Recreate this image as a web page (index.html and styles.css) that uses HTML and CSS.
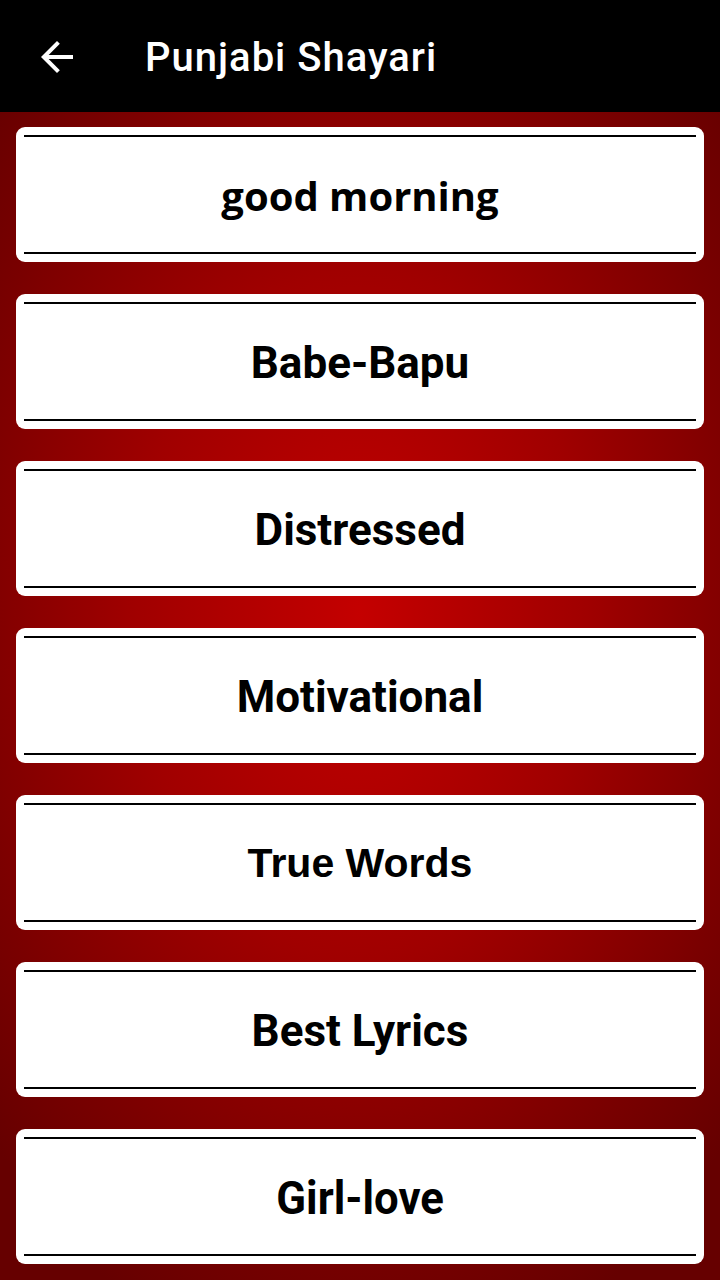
FILE: index.html
```html
<!DOCTYPE html>
<html>
<head>
<meta charset="utf-8">
<link rel="stylesheet" href="styles.css">
</head>
<body>
<header class="appbar">
  <svg class="back" viewBox="0 0 24 24" width="48" height="48"><path fill="#fff" d="M20 11H7.83l5.59-5.59L12 4l-8 8 8 8 1.41-1.41L7.83 13H20v-2z"/></svg>
  <h1 class="title">Punjabi Shayari</h1>
</header>
<main class="list">
  <div class="card"><span class="label f-open">good morning</span></div>
  <div class="card"><span class="label">Babe-Bapu</span></div>
  <div class="card"><span class="label">Distressed</span></div>
  <div class="card"><span class="label">Motivational</span></div>
  <div class="card"><span class="label f-arial">True Words</span></div>
  <div class="card"><span class="label">Best Lyrics</span></div>
  <div class="card"><span class="label f-cond">Girl-love</span></div>
</main>
</body>
</html>
```
FILE: styles.css
```css
* { box-sizing: border-box; }
html, body { margin: 0; padding: 0; }
body {
  width: 720px;
  height: 1280px;
  overflow: hidden;
  font-family: Roboto, "Liberation Sans", sans-serif;
  background: radial-gradient(ellipse 70% 60% at 50% 48%, #c40000 0%, #a00000 45%, #7a0000 80%, #660000 100%);
}
.appbar {
  height: 112px;
  background: #000;
  display: flex;
  align-items: center;
  padding-left: 33px;
}
.back { display: block; margin-top: 2px; }
.title {
  margin: 2px 0 0 64px;
  color: #fff;
  font-family: Roboto, sans-serif;
  font-weight: 500;
  font-size: 40px;
  letter-spacing: 1px;
}
.list {
  display: flex;
  flex-direction: column;
  gap: 32px;
  padding: 15px 16px 0;
}
.card {
  height: 135px;
  background: #fff;
  border-radius: 9px;
  display: flex;
  align-items: center;
  justify-content: center;
  position: relative;
}
.card::before, .card::after {
  content: "";
  position: absolute;
  left: 8px;
  right: 8px;
  height: 2px;
  background: #000;
}
.card::before { top: 8px; }
.card::after { bottom: 8px; }
.label {
  font-family: Roboto, sans-serif;
  font-weight: 700;
  font-size: 44px;
  color: #000;
  margin-top: 2px;
}
.f-open { font-family: "Open Sans", sans-serif; font-size: 40px; }
.f-arial { font-family: "Liberation Sans", Arial, sans-serif; font-size: 41px; }
.f-cond { display: inline-block; font-size: 47px; transform: scaleX(0.93); }
```
